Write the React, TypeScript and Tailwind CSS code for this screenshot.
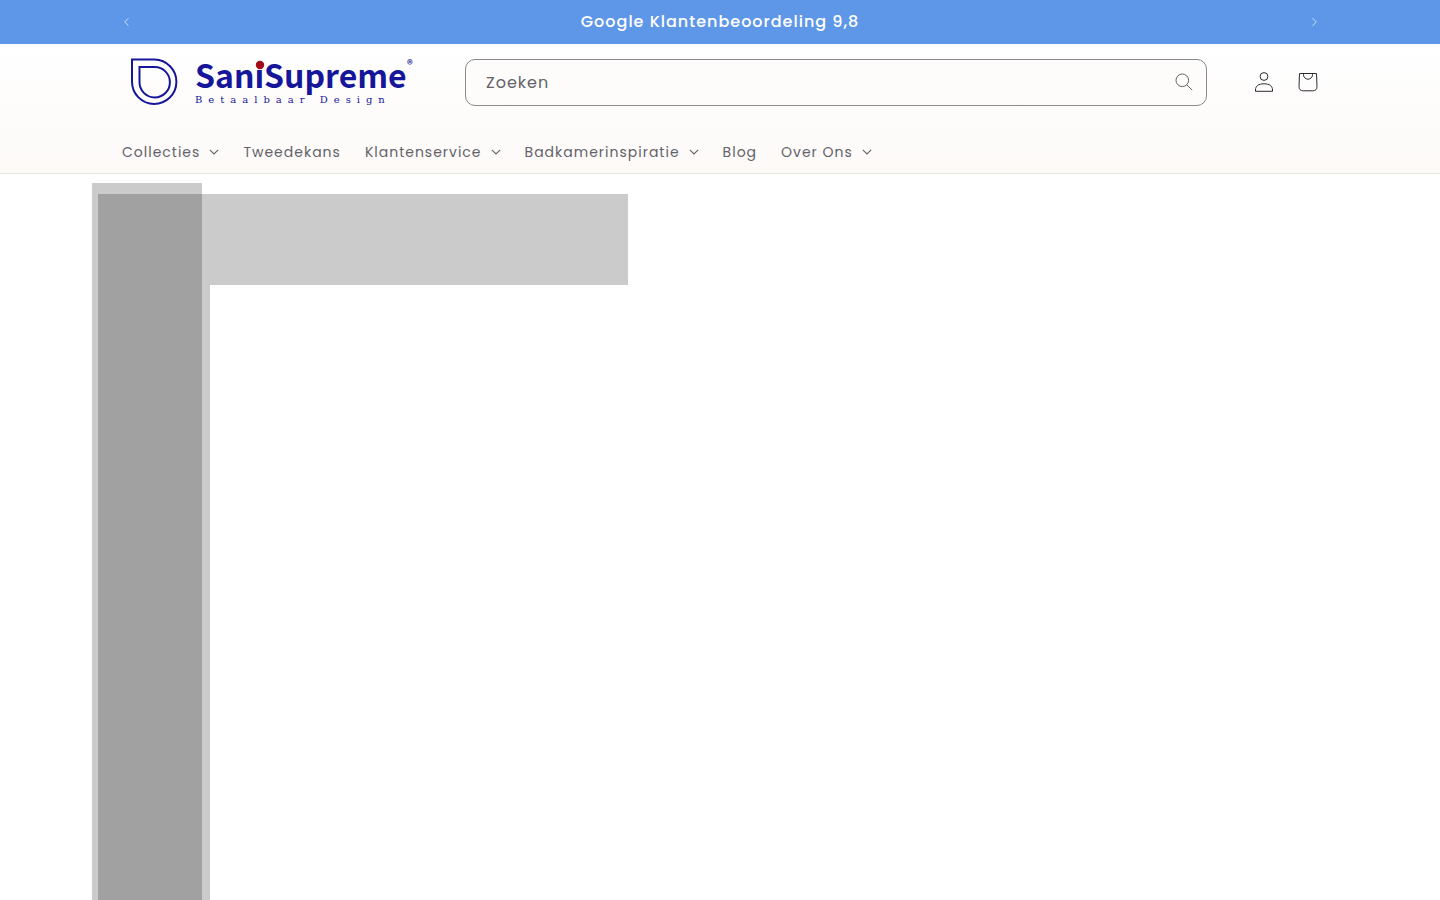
import { useState } from "react";

interface NavItem {
  label: string;
  hasMenu: boolean;
}

const NAV_ITEMS: NavItem[] = [
  { label: "Collecties", hasMenu: true },
  { label: "Tweedekans", hasMenu: false },
  { label: "Klantenservice", hasMenu: true },
  { label: "Badkamerinspiratie", hasMenu: true },
  { label: "Blog", hasMenu: false },
  { label: "Over Ons", hasMenu: true },
];

function Caret({ className }: { className: string }) {
  return (
    <svg className={className} viewBox="0 0 10 6" fill="none" stroke="currentColor" aria-hidden="true">
      <path d="M0.8 0.8L5 5L9.2 0.8" strokeWidth={1.1} />
    </svg>
  );
}

function Logo() {
  return (
    <svg className="block h-[60px] w-[300px]" viewBox="0 0 300 60" role="img" aria-label="SaniSupreme Betaalbaar Design">
      <g fill="none" stroke="#16169a" strokeWidth={2}>
        <path d="M12 7.500H34.500A22.200 22.200 0 1 1 12 29.700Z" />
        <path d="M19.500 15H34.500A15.200 15.200 0 1 1 19.500 30Z" />
      </g>
      <text x="75" y="36" fill="#16169a" fontSize="32" fontWeight="700" fontFamily="'Noto Sans CJK SC', sans-serif">
        SaniSupreme
      </text>
      <circle cx="140" cy="13" r="4.200" fill="#a00c18" />
      <text x="287" y="17" fill="#16169a" fontSize="11" fontWeight="700" fontFamily="'Noto Sans CJK SC', sans-serif">
        ®
      </text>
      <text x="75" y="51" fill="#16169a" fontSize="10" letterSpacing="6" fontFamily="'DejaVu Serif', serif">
        Betaalbaar Design
      </text>
    </svg>
  );
}

function AnnouncementBar() {
  return (
    <div className="bg-[#5f97e8] text-white">
      <div className="mx-auto flex h-11 max-w-[1232px] items-center justify-between">
        <button type="button" aria-label="Vorige" className="flex h-11 w-11 items-center justify-center text-white/70">
          <Caret className="h-[6px] w-[9px] rotate-90" />
        </button>
        <p className="text-base font-medium tracking-[1px]">Google Klantenbeoordeling 9,8</p>
        <button type="button" aria-label="Volgende" className="flex h-11 w-11 items-center justify-center text-white/70">
          <Caret className="h-[6px] w-[9px] -rotate-90" />
        </button>
      </div>
    </div>
  );
}

function SearchBox() {
  const [query, setQuery] = useState("");
  return (
    <form
      role="search"
      onSubmit={(e) => e.preventDefault()}
      className="flex h-[47px] min-w-0 flex-1 items-center rounded-[10px] border border-[#8a8a8e] bg-[#fdfcfa]"
    >
      <input
        type="search"
        aria-label="Zoeken"
        placeholder="Zoeken"
        value={query}
        onChange={(e) => setQuery(e.target.value)}
        className="h-full min-w-0 flex-1 bg-transparent pl-5 text-base tracking-[1px] text-[#626268] outline-none placeholder:text-[#626268]"
      />
      <button type="submit" aria-label="Zoeken" className="flex h-11 w-11 items-center justify-center text-[#626268]">
        <svg className="h-[18px] w-[18px]" viewBox="0 0 18 18" fill="none" stroke="currentColor">
          <circle cx="7.300" cy="7.300" r="6.300" />
          <path d="M11.800 11.800L17.200 17.200" />
        </svg>
      </button>
    </form>
  );
}

function Header() {
  return (
    <header className="border-b border-[#e6e4df] bg-linear-to-b from-white to-[#fdfaf8]">
      <div className="mx-auto max-w-[1200px]">
        <div className="flex items-center pt-2">
          <a href="#" className="mr-[45px] shrink-0">
            <Logo />
          </a>
          <SearchBox />
          <div className="-mr-[10px] ml-[35px] flex text-[#2a2a30]">
            <a href="#" aria-label="Inloggen" className="flex h-11 w-11 items-center justify-center">
              <svg className="h-5 w-5" viewBox="0 0 20 20" fill="none" stroke="currentColor">
                <circle cx="10" cy="4.500" r="3.900" />
                <path d="M1.500 19.300V18C1.500 14 4.500 11.800 10 11.800S18.500 14 18.500 18V19.300Z" />
              </svg>
            </a>
            <a href="#" aria-label="Winkelwagen" className="flex h-11 w-11 items-center justify-center">
              <svg className="h-5 w-5" viewBox="0 0 20 20" fill="none" stroke="currentColor">
                <path d="M1.500 1.500H18.500L19 14.500Q19 18.800 14.700 18.800H5.300Q1 18.800 1 14.500Z" />
                <path d="M5.500 1.500V2.700A4.500 4.500 0 0 0 14.500 2.700V1.500" />
              </svg>
            </a>
          </div>
        </div>
        <nav className="pt-5 pb-[2px]">
          <ul className="-ml-[10px] flex">
            {NAV_ITEMS.map((item) => (
              <li key={item.label}>
                {item.hasMenu ? (
                  <button
                    type="button"
                    className="flex h-[39px] items-center gap-[9px] px-3 text-sm tracking-[1px] text-[#626268]"
                  >
                    {item.label}
                    <Caret className="h-[6px] w-[10px]" />
                  </button>
                ) : (
                  <a href="#" className="flex h-[39px] items-center px-3 text-sm tracking-[1px] text-[#626268]">
                    {item.label}
                  </a>
                )}
              </li>
            ))}
          </ul>
        </nav>
      </div>
    </header>
  );
}

export default function App() {
  return (
    <div className="flex h-screen flex-col overflow-hidden bg-white font-['Poppins','Inter',sans-serif]">
      <AnnouncementBar />
      <Header />
      <main className="min-h-0 flex-1 overflow-hidden px-[92px] pt-[9px]">
        {/* Two translucent shapes, darker where they overlap */}
        <svg className="block h-[1200px] w-[536px]" viewBox="0 0 536 1200" fill="#000000" fillOpacity={0.205} aria-hidden="true">
          <path d="M0 0H110V1200H0Z" />
          <path d="M6 11H536V102H118V1200H6Z" />
        </svg>
      </main>
    </div>
  );
}
